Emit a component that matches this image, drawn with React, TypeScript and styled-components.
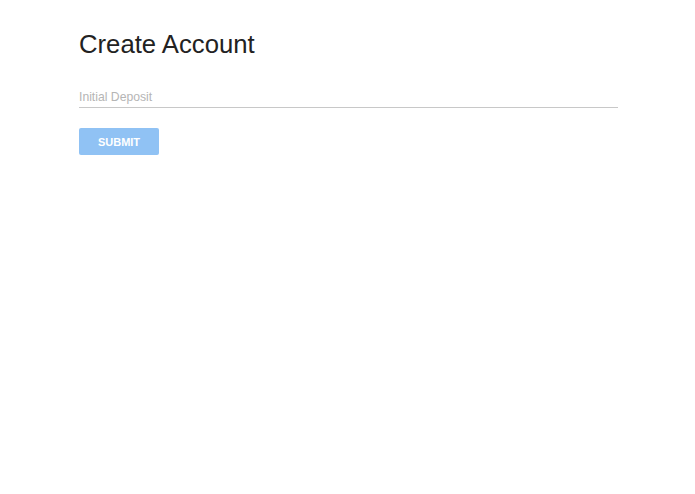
import * as React from 'react'
import styled, { createGlobalStyle } from 'styled-components'

const GlobalStyle = createGlobalStyle`
  body {
    margin: 0;
    background: #fff;
    font-family: 'Liberation Sans', Arial, sans-serif;
  }
`

const App: React.FC = () => (
  <>
    <GlobalStyle />
    <Container>
      <Title>Create Account</Title>
      <Form onSubmit={e => e.preventDefault()}>
        <Field>
          <Input placeholder="Initial Deposit" />
        </Field>
        <SubmitButton type="submit" disabled>
          Submit
        </SubmitButton>
      </Form>
    </Container>
  </>
)

const Container = styled.div`
  padding: 29px 77px 0 79px;
`

const Title = styled.h1`
  margin: 0;
  font-size: 25.7px;
  font-weight: 400;
  line-height: 30px;
  color: #222;
`

const Form = styled.form`
  display: flex;
  flex-direction: column;
  align-items: flex-start;
`

const Field = styled.div`
  width: 100%;
  margin-top: 20px;
  border-bottom: 1px solid #c8c8c8;
`

const Input = styled.input`
  width: 100%;
  box-sizing: border-box;
  border: none;
  outline: none;
  padding: 10px 0 2px;
  font-family: inherit;
  font-size: 12.2px;
  line-height: 16px;
  color: #333;
  background: transparent;

  &::placeholder {
    color: #b5b5b5;
  }
`

const SubmitButton = styled.button`
  margin-top: 20px;
  width: 80px;
  height: 27px;
  border: none;
  border-radius: 2px;
  background: #90c2f4;
  color: #fff;
  font-family: inherit;
  font-size: 11px;
  font-weight: 700;
  text-transform: uppercase;
`

export default App
